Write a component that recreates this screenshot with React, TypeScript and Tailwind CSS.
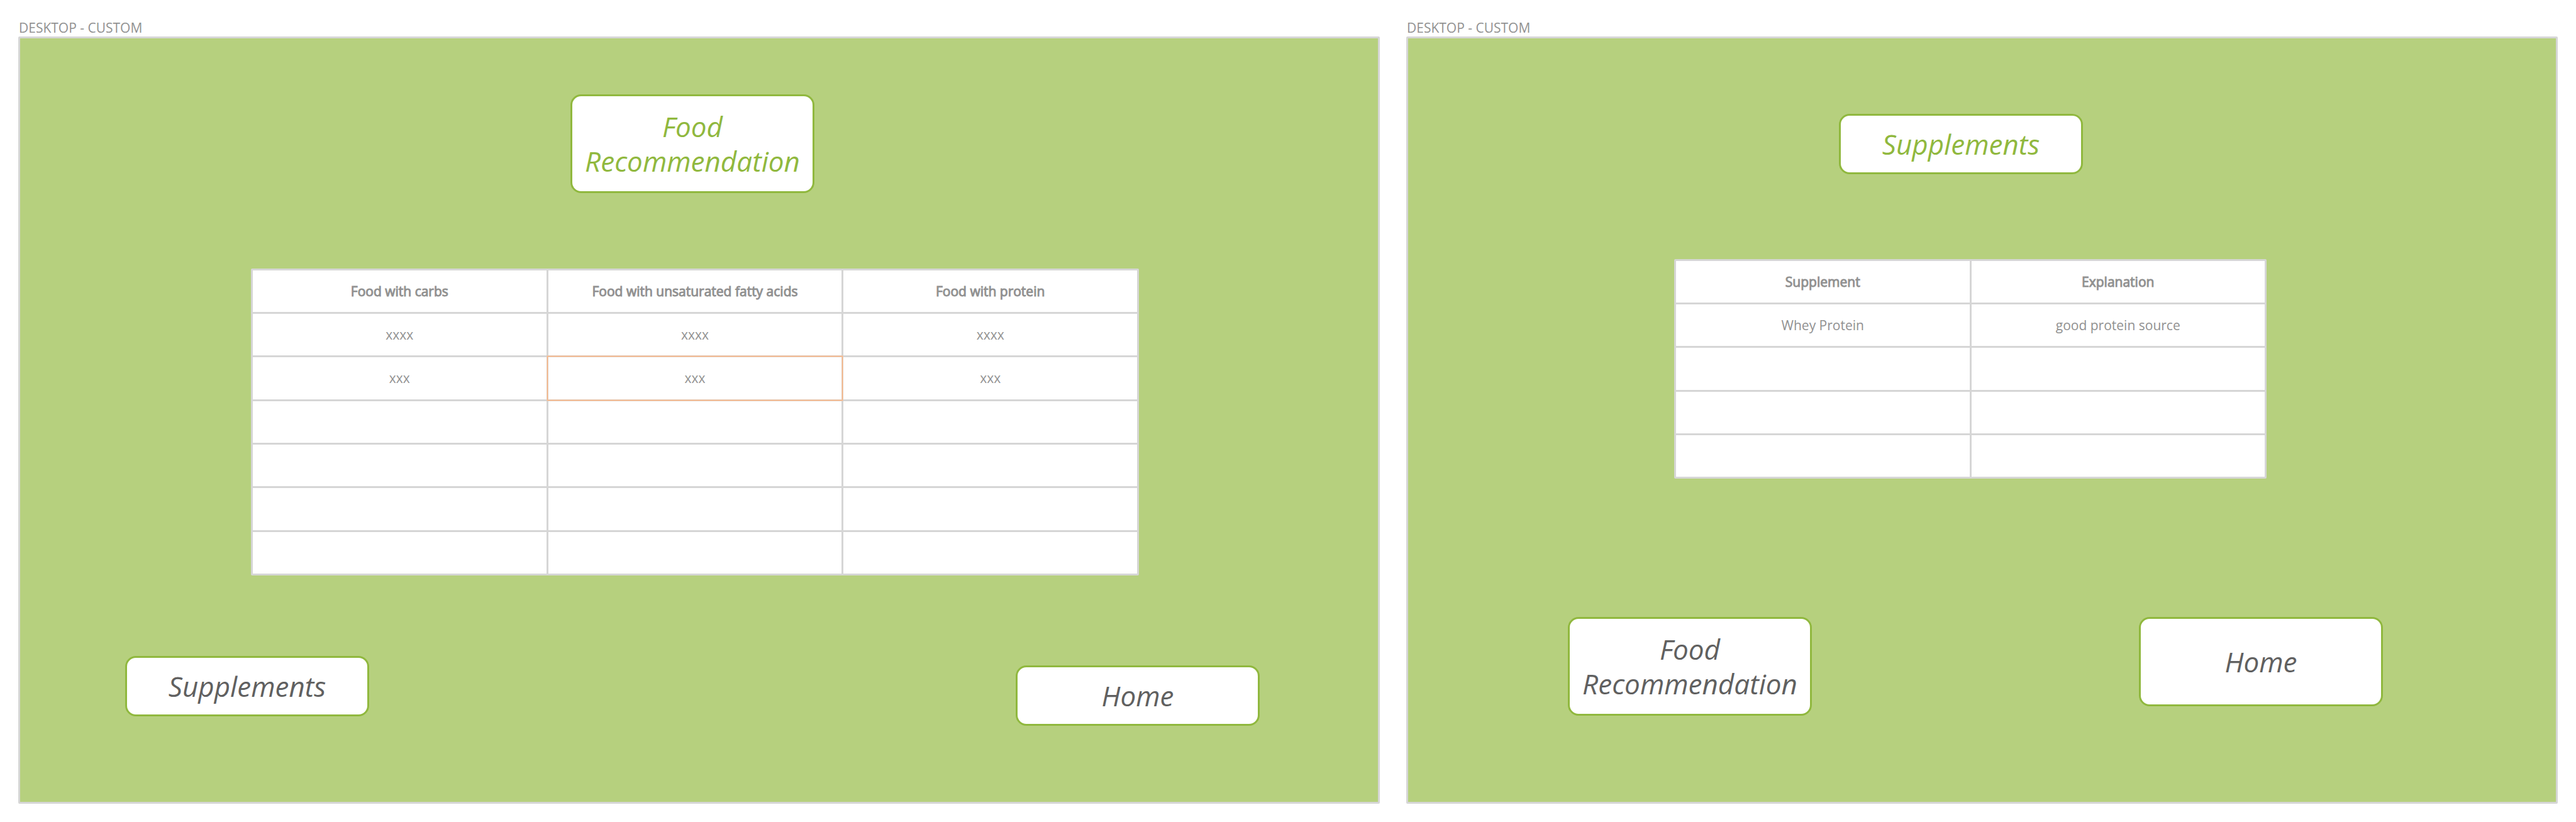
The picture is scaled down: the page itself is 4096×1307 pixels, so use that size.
import React from "react";

const boxStyle =
  "flex items-center justify-center rounded-[17px] border-3 border-[#90b83e] bg-white px-4 text-center font-normal text-[44px] leading-[55px] italic";

function Title({ children, className }: { children: React.ReactNode; className: string }) {
  return <h2 className={`${boxStyle} col-start-2 text-[#90b83e] ${className}`}>{children}</h2>;
}

function NavButton({ children, className }: { children: React.ReactNode; className: string }) {
  return (
    <button type="button" className={`${boxStyle} cursor-pointer text-[#606060] ${className}`}>
      {children}
    </button>
  );
}

type Cell = { row: number; column: number };

function DataTable({
  headers,
  rows,
  selected,
  className,
}: {
  headers: string[];
  rows: string[][];
  selected?: Cell;
  className: string;
}) {
  return (
    <table
      className={`col-start-2 w-full table-fixed border-separate border-spacing-[3px] rounded-[2px] bg-[#d6d6d6] text-center text-[21px] leading-7 text-[#919191] ${className}`}
    >
      <thead>
        <tr className="h-[66px]">
          {headers.map((header) => (
            <th
              key={header}
              scope="col"
              className="bg-white p-0 font-normal [-webkit-text-stroke:1px_#919191]"
            >
              {header}
            </th>
          ))}
        </tr>
      </thead>
      <tbody>
        {rows.map((row, rowIndex) => (
          <tr key={rowIndex} className="h-[66px]">
            {row.map((text, columnIndex) => (
              <td key={columnIndex} className="relative bg-white p-0">
                {text}
                {selected?.row === rowIndex && selected.column === columnIndex && (
                  <span className="absolute -inset-[2px] border border-[#ffb580] ring-1 inset-ring-1 ring-[#ffb580]/30 inset-ring-[#ffb580]/30" />
                )}
              </td>
            ))}
          </tr>
        ))}
      </tbody>
    </table>
  );
}

function Artboard({ children, className }: { children: React.ReactNode; className: string }) {
  return (
    <section className={`flex min-w-0 flex-col ${className}`}>
      <p className="pl-px text-[21px] leading-7 text-[#919191]">DESKTOP - CUSTOM</p>
      <div className="grow rounded-[2px] border-3 border-[#d6d6d6] bg-[#b6d07e]">{children}</div>
    </section>
  );
}

const foodRows = [
  ["xxxx", "xxxx", "xxxx"],
  ["xxx", "xxx", "xxx"],
  ["", "", ""],
  ["", "", ""],
  ["", "", ""],
  ["", "", ""],
];

const supplementRows = [
  ["Whey Protein", "good protein source"],
  ["", ""],
  ["", ""],
  ["", ""],
];

export default function App() {
  return (
    <main className="flex min-h-screen gap-[42px] bg-white px-[29px] pt-[30px] pb-[29px] font-['Open_Sans','Noto_Sans',sans-serif]">
      <Artboard className="flex-[2165]">
        <div className="grid grid-cols-[875fr_388px_896fr] pt-[89px]">
          <Title className="min-h-[157px]">Food Recommendation</Title>
        </div>
        <div className="grid grid-cols-[367fr_1412fr_380fr] pt-[120px]">
          <DataTable
            className="h-[488px]"
            headers={["Food with carbs", "Food with unsaturated fatty acids", "Food with protein"]}
            rows={foodRows}
            selected={{ row: 1, column: 1 }}
          />
        </div>
        <nav className="grid grid-cols-[167fr_388px_1028fr_388px_188fr] pt-32 pb-[120px]">
          <NavButton className="col-start-2 mb-[15px] min-h-24">Supplements</NavButton>
          <NavButton className="col-start-4 mt-[15px] min-h-24">Home</NavButton>
        </nav>
      </Artboard>

      <Artboard className="flex-[1831]">
        <div className="grid grid-cols-[685fr_388px_752fr] pt-[120px]">
          <Title className="min-h-24">Supplements</Title>
        </div>
        <div className="grid grid-cols-[423fr_942fr_460fr] pt-[135px]">
          <DataTable className="h-[349px]" headers={["Supplement", "Explanation"]} rows={supplementRows} />
        </div>
        <nav className="grid grid-cols-[254fr_388px_520fr_388px_275fr] items-start pt-[220px] pb-[120px]">
          <NavButton className="col-start-2 min-h-[157px]">Food Recommendation</NavButton>
          <NavButton className="col-start-4 min-h-[142px]">Home</NavButton>
        </nav>
      </Artboard>
    </main>
  );
}
